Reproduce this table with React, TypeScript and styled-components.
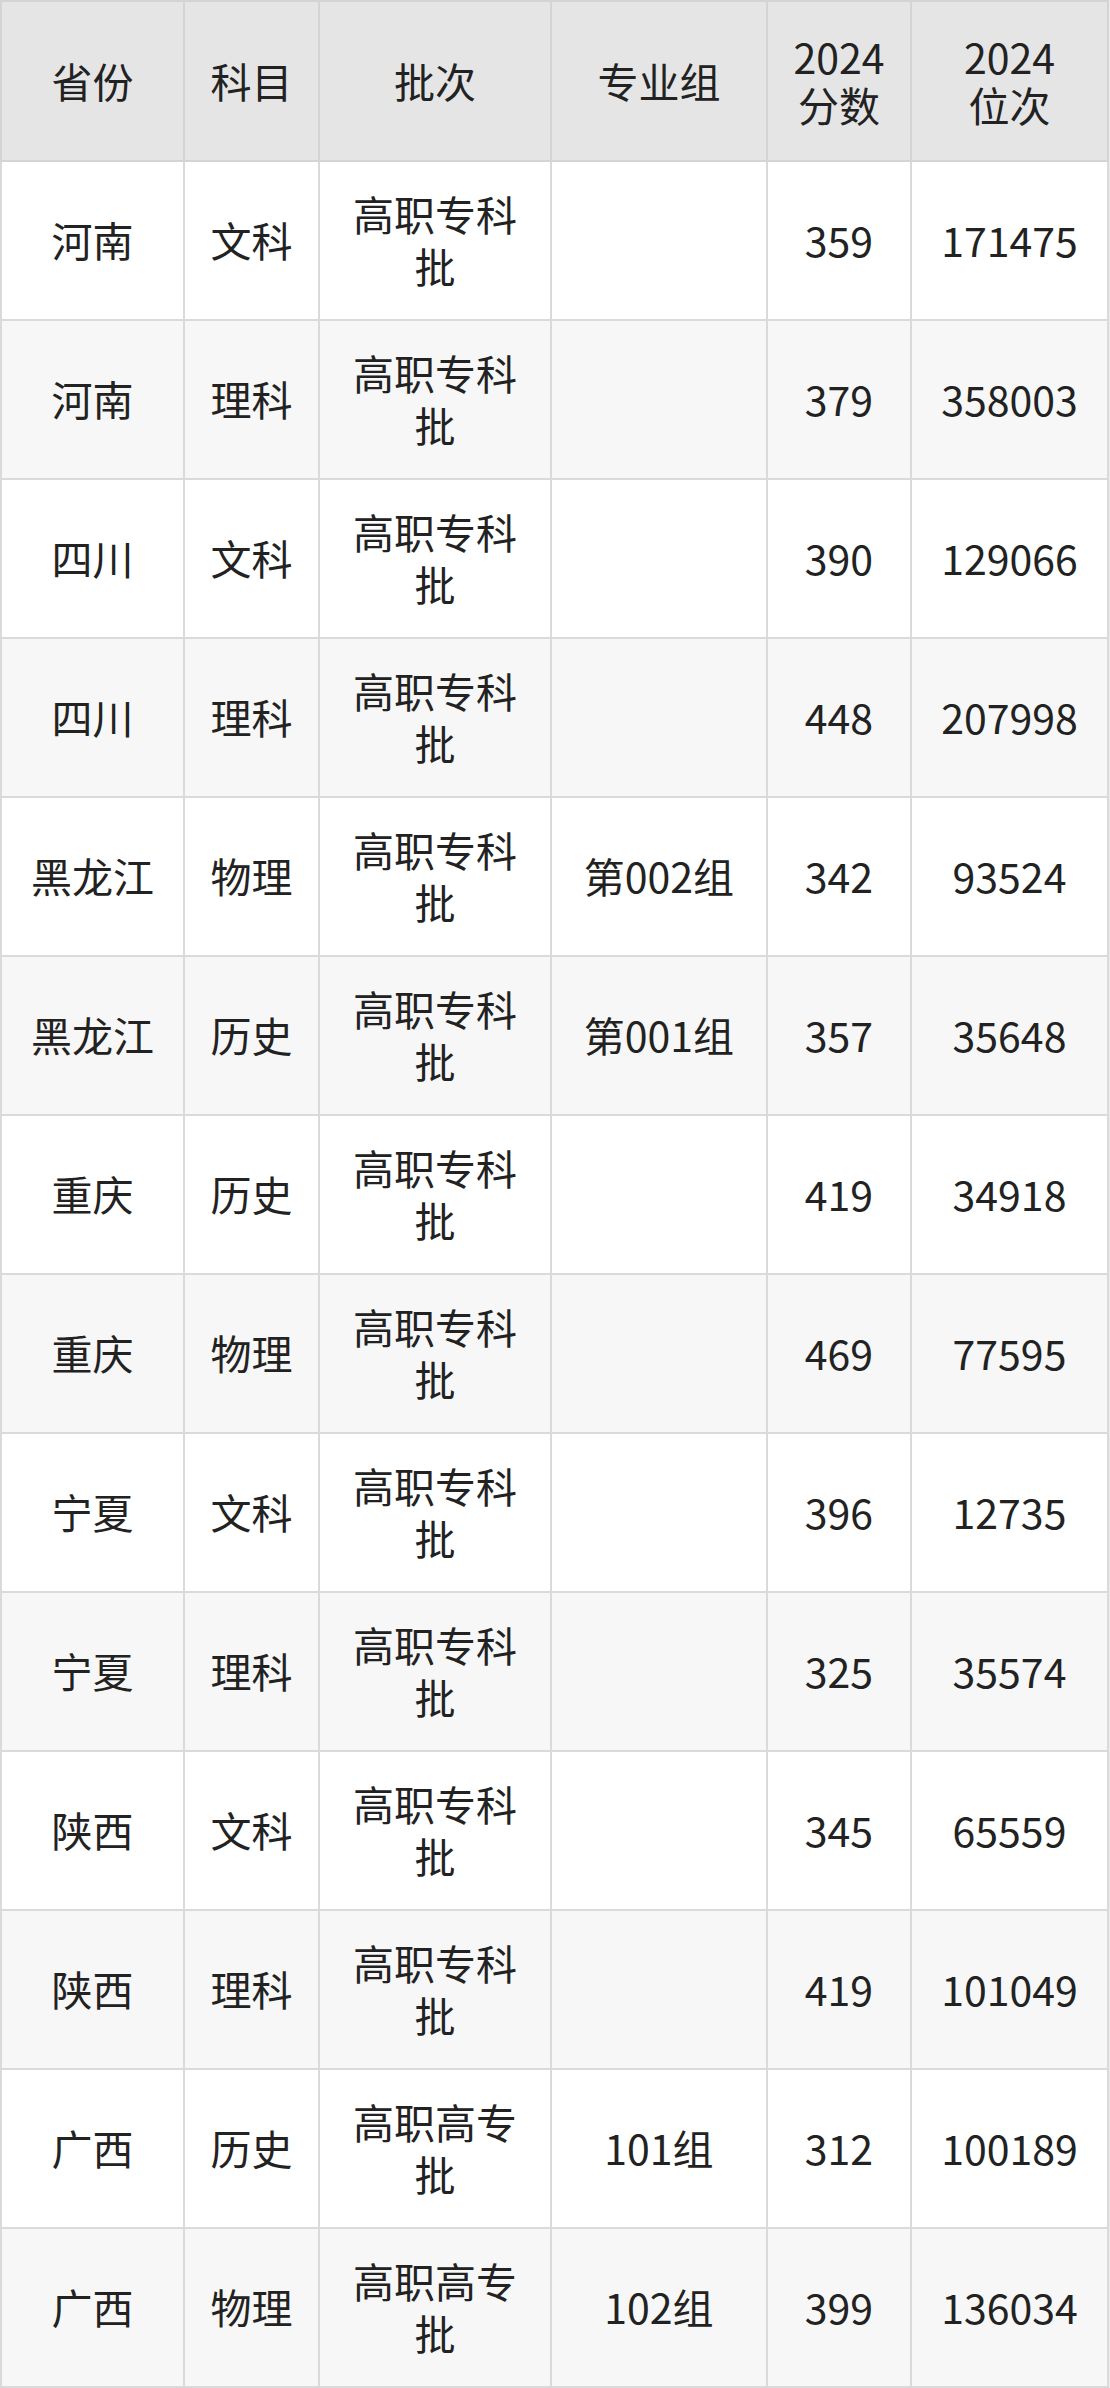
import React from "react";
import styled, { createGlobalStyle } from "styled-components";

const Global = createGlobalStyle`
  html, body { margin: 0; padding: 0; background: #e9e9e9; }
  body { font-family: "Noto Sans CJK SC", "Noto Sans", sans-serif; color: #222; }
`;

const Wrap = styled.div`
  width: 1110px;
  height: 2388px;
  padding: 0 3px 0 0;
  box-sizing: border-box;
  background: #ececec;
  overflow: hidden;
`;

const Table = styled.table`
  width: 1107px;
  border-collapse: collapse;
  table-layout: fixed;
  font-size: 41px;
  line-height: 52px;
  text-align: center;
`;

const HeadCell = styled.th`
  background: #e5e5e5;
  border: 2px solid #d4d4d4;
  font-weight: 400;
  height: 156px;
  padding: 0 18px 2px;
  line-height: 48px;
  vertical-align: middle;
`;

const Row = styled.tr<{ $alt: boolean }>`
  background: ${(p) => (p.$alt ? "#f7f7f7" : "#ffffff")};
`;

const Cell = styled.td`
  border: 2px solid #dadada;
  height: 154px;
  padding: 0 18px 3px;
  vertical-align: middle;
`;

const cols = [183, 135, 232, 216, 144, 197];

const data: [string, string, string, string, string, string][] = [
  ["河南", "文科", "高职专科批", "", "359", "171475"],
  ["河南", "理科", "高职专科批", "", "379", "358003"],
  ["四川", "文科", "高职专科批", "", "390", "129066"],
  ["四川", "理科", "高职专科批", "", "448", "207998"],
  ["黑龙江", "物理", "高职专科批", "第002组", "342", "93524"],
  ["黑龙江", "历史", "高职专科批", "第001组", "357", "35648"],
  ["重庆", "历史", "高职专科批", "", "419", "34918"],
  ["重庆", "物理", "高职专科批", "", "469", "77595"],
  ["宁夏", "文科", "高职专科批", "", "396", "12735"],
  ["宁夏", "理科", "高职专科批", "", "325", "35574"],
  ["陕西", "文科", "高职专科批", "", "345", "65559"],
  ["陕西", "理科", "高职专科批", "", "419", "101049"],
  ["广西", "历史", "高职高专批", "101组", "312", "100189"],
  ["广西", "物理", "高职高专批", "102组", "399", "136034"],
];

export default function App() {
  return (
    <Wrap>
      <Global />
      <Table>
        <colgroup>
          {cols.map((w, i) => (
            <col key={i} style={{ width: w }} />
          ))}
        </colgroup>
        <thead>
          <tr>
            <HeadCell>省份</HeadCell>
            <HeadCell>科目</HeadCell>
            <HeadCell>批次</HeadCell>
            <HeadCell>专业组</HeadCell>
            <HeadCell>
              2024
              <br />
              分数
            </HeadCell>
            <HeadCell>
              2024
              <br />
              位次
            </HeadCell>
          </tr>
        </thead>
        <tbody>
          {data.map((r, i) => (
            <Row key={i} $alt={i % 2 === 1}>
              {r.map((c, j) => (
                <Cell key={j}>{c}</Cell>
              ))}
            </Row>
          ))}
        </tbody>
      </Table>
    </Wrap>
  );
}
